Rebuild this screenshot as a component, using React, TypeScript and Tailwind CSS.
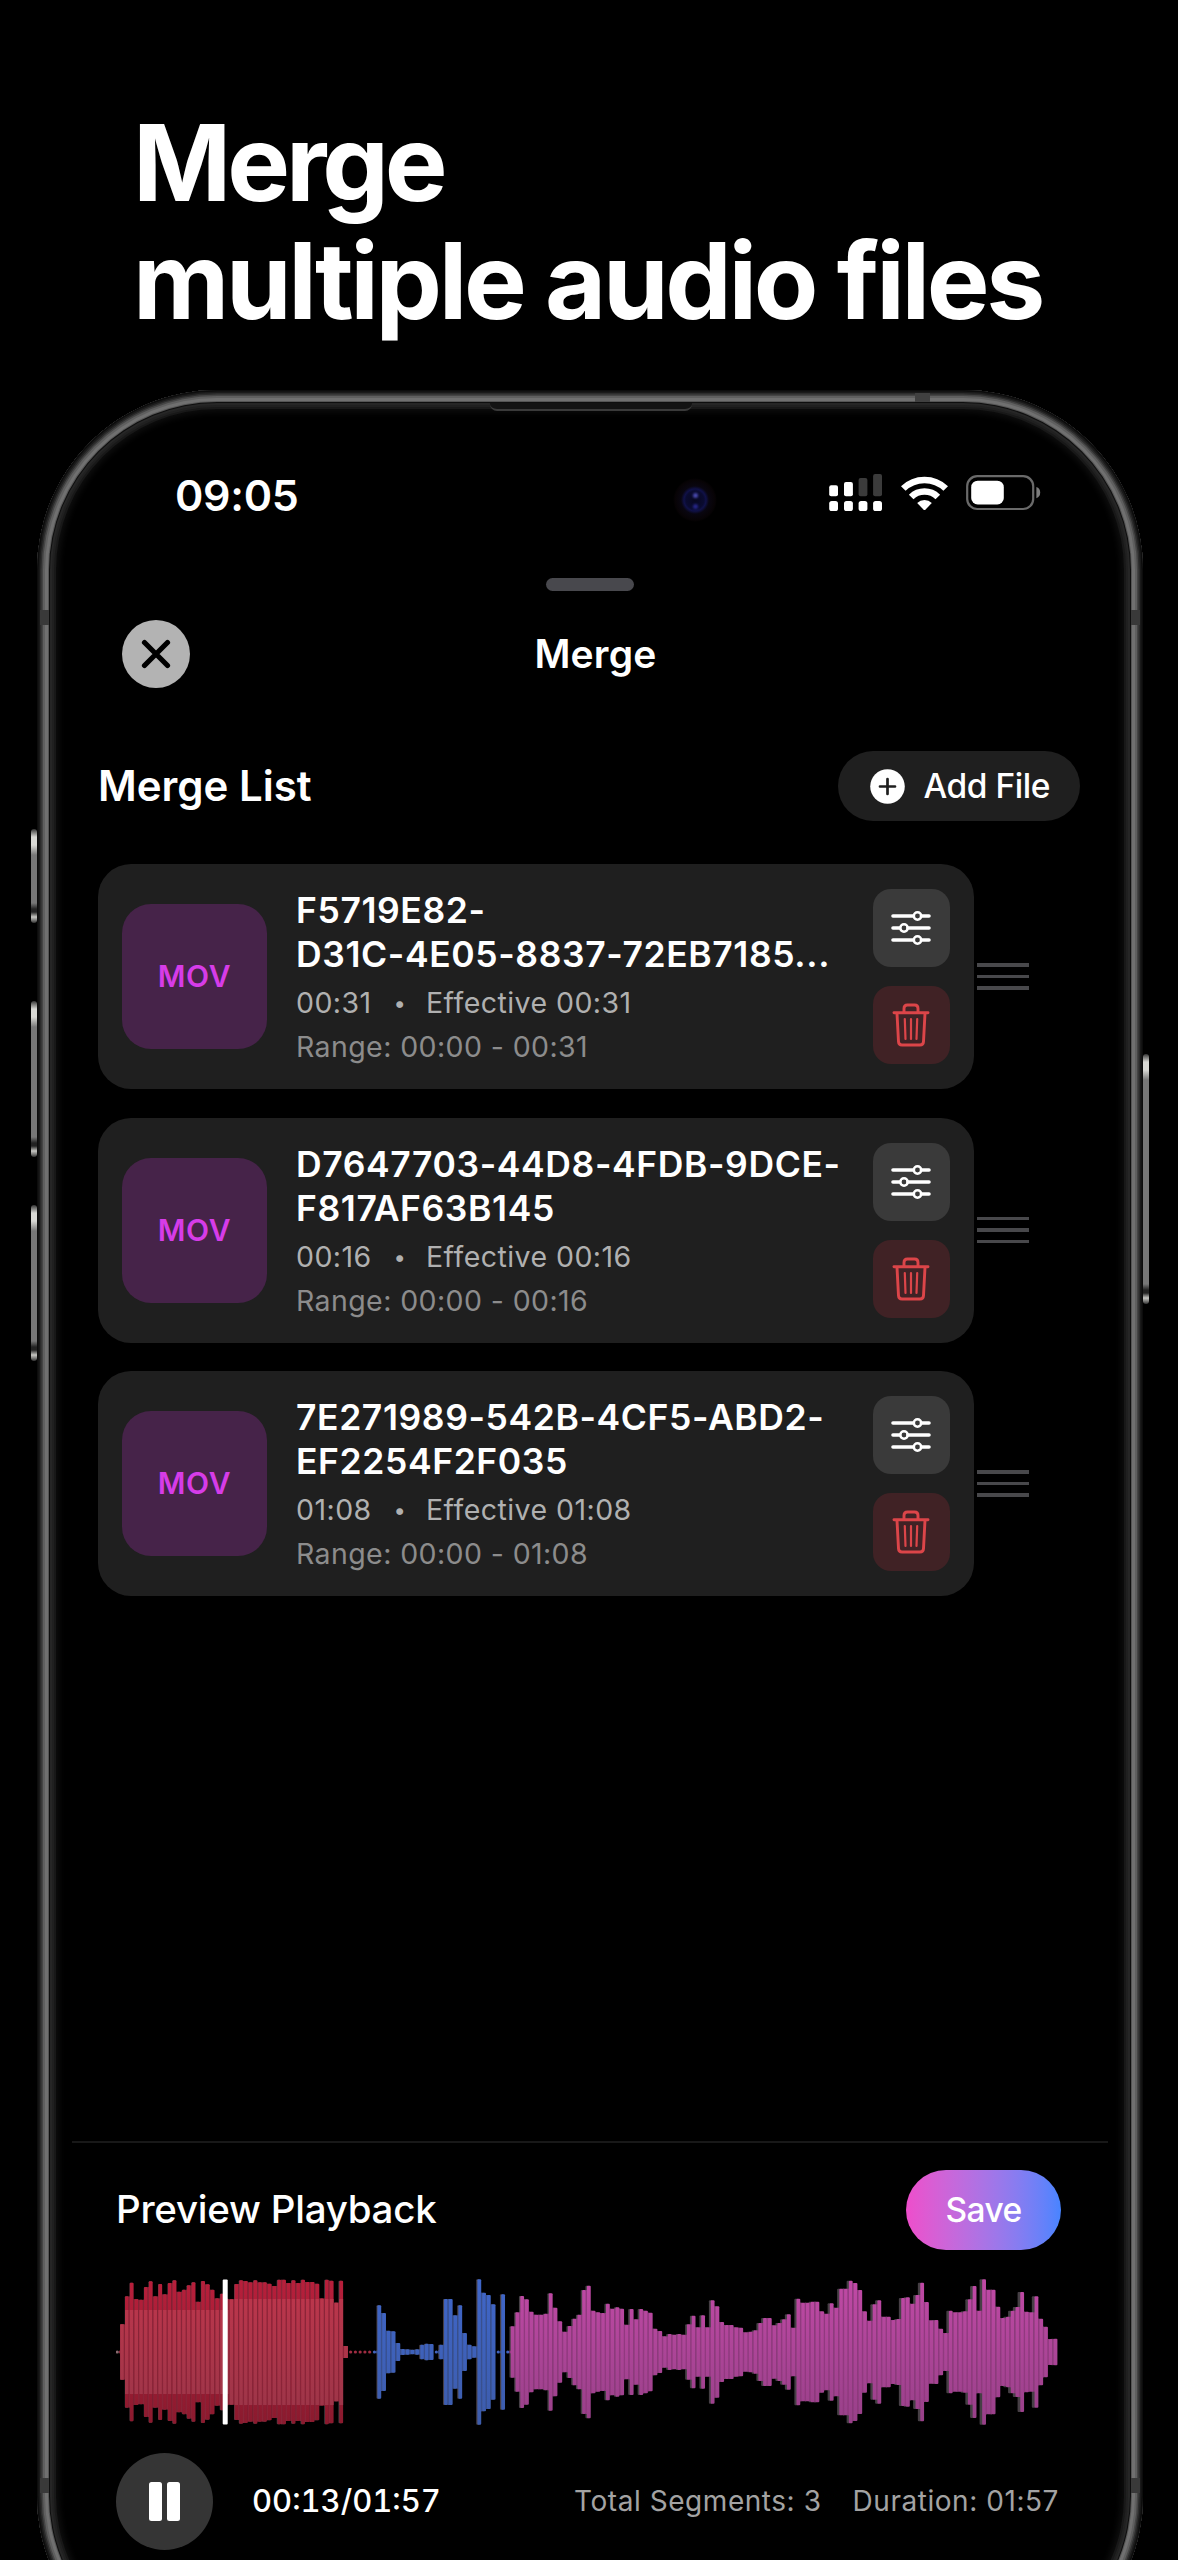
type Clip = {
  lines: string[];
  length: string;
};

const CLIPS: Clip[] = [
  { lines: ['F5719E82-', 'D31C-4E05-8837-72EB7185...'], length: '00:31' },
  { lines: ['D7647703-44D8-4FDB-9DCE-', 'F817AF63B145'], length: '00:16' },
  { lines: ['7E271989-542B-4CF5-ABD2-', 'EF2254F2F035'], length: '01:08' },
];

// bar half heights, 218 = full scale
const RED = [
  4, 83, 167, 208, 159, 157, 195, 212, 167, 204, 173, 207, 215, 181, 187, 200, 209, 151, 213, 203,
  187, 161, 175, 160, 158, 204, 215, 213, 209, 215, 209, 209, 205, 198, 217, 217, 207, 215, 207, 217,
  210, 210, 205, 161, 217, 214, 148, 214, 18, 4, 4, 4, 4, 4,
];
const BLUE = [
  4, 140, 117, 64, 62, 27, 9, 8, 7, 8, 22, 25, 24, 5, 22, 159, 159, 110, 140, 57, 22, 17, 218, 178,
  171, 143, 4, 173, 4,
];
const PINK = [
  77, 119, 168, 158, 121, 112, 112, 115, 176, 133, 92, 61, 78, 100, 112, 186, 199, 124, 119, 117,
  145, 130, 134, 130, 82, 129, 98, 129, 124, 118, 70, 63, 47, 54, 52, 54, 52, 83, 109, 74, 110, 74,
  155, 137, 90, 81, 81, 74, 73, 59, 61, 65, 87, 102, 102, 80, 87, 98, 113, 73, 160, 148, 148, 151,
  151, 122, 115, 146, 133, 190, 190, 214, 207, 186, 122, 94, 143, 155, 106, 106, 96, 99, 162, 164,
  145, 171, 208, 150, 95, 96, 70, 57, 124, 119, 119, 122, 158, 198, 124, 218, 187, 187, 136, 102,
  106, 124, 135, 180, 121, 119, 167, 100, 76, 39, 40,
];

const BARS = [
  ...RED.map((h) => ({ h, tone: 'red' })),
  ...BLUE.map((h) => ({ h, tone: 'blue' })),
  ...PINK.map((h) => ({ h, tone: 'pink' })),
];

const PITCH = 4.762;
const barX = (i: number) => 1.3 + i * PITCH;

function Waveform() {
  const mid = 73;
  return (
    <svg width="944" height="146" viewBox="0 0 944 146" className="block">
      <defs>
        <linearGradient id="red" gradientUnits="userSpaceOnUse" x1="0" y1="0" x2="0" y2="146">
          <stop offset="0" stopColor="#b81f3b" />
          <stop offset="1" stopColor="#8a1a2e" />
        </linearGradient>
        <linearGradient id="redInner" gradientUnits="userSpaceOnUse" x1="0" y1="0" x2="0" y2="146">
          <stop offset="0" stopColor="#c0364c" />
          <stop offset="1" stopColor="#983548" />
        </linearGradient>
        <linearGradient id="blue" gradientUnits="userSpaceOnUse" x1="0" y1="0" x2="0" y2="146">
          <stop offset="0" stopColor="#3f66c9" />
          <stop offset="1" stopColor="#3d5cab" />
        </linearGradient>
        <linearGradient id="pink" gradientUnits="userSpaceOnUse" x1="0" y1="0" x2="0" y2="146">
          <stop offset="0" stopColor="#c149a6" />
          <stop offset="1" stopColor="#974088" />
        </linearGradient>
      </defs>
      {/* trailing shadow bars, drifting left along the track */}
      {BARS.map(({ h }, i) =>
        h < 6 ? null : (
          <rect
            key={i}
            x={barX(i) - 2 - (i / BARS.length) * 2.6}
            y={mid - h / 3}
            width={3.6}
            height={(h * 2) / 3}
            rx="1"
            fill="#463f45"
          />
        )
      )}
      {BARS.map(({ h, tone }, i) => {
        const half = h / 3;
        const x = barX(i);
        const inner = Math.min(half, i < 24 ? 42 : 53);
        const gap = tone === 'red' ? '#8a2438' : tone === 'blue' ? '#38508f' : '#91397f';
        const prev = i > 0 ? BARS[i - 1].h / 3 : 0;
        const joint = Math.min(half, prev);
        if (half < 2) {
          return (
            <circle
              key={i}
              cx={x}
              cy={mid}
              r="1.6"
              fill={i === 0 ? '#8a6a70' : tone === 'red' ? '#a02c42' : tone === 'blue' ? '#4263bd' : '#a04590'}
            />
          );
        }
        return (
          <g key={i}>
            <rect x={x - 3.1} y={mid - joint} width={1.6} height={joint * 2} fill={gap} />
            <rect x={x - 1.8} y={mid - half} width={3.8} height={half * 2} rx="1" fill={`url(#${tone})`} />
            {tone === 'red' && (
              <rect x={x - 1.8} y={mid - inner} width={3.8} height={inner * 2} fill="url(#redInner)" />
            )}
          </g>
        );
      })}
      <rect x="106.7" y="0.4" width="5" height="145.2" rx="1" fill="#fff" />
    </svg>
  );
}

function SignalIcon() {
  return (
    <svg width="54" height="38" viewBox="0 0 54 38" className="block">
      <g fill="#fff">
        <rect x="0.2" y="11.3" width="8.8" height="11" rx="2" />
        <rect x="15" y="8" width="8.9" height="14.3" rx="2" />
        <rect x="0.2" y="27" width="8.8" height="10" rx="2.6" />
        <rect x="15" y="27" width="8.9" height="10" rx="2.6" />
        <rect x="29.6" y="27" width="8.8" height="10" rx="2.6" />
        <rect x="44.1" y="27" width="8.9" height="10" rx="2.6" />
      </g>
      <g fill="#3b3b3b">
        <rect x="29.6" y="4" width="8.8" height="18.3" rx="2" />
        <rect x="44.1" y="0" width="8.9" height="22.3" rx="2" />
      </g>
    </svg>
  );
}

function WifiIcon() {
  return (
    <svg width="47" height="35" viewBox="0 0 47 35" className="block">
      <g fill="none" stroke="#fff" strokeWidth="6.6">
        <path d="M2.3 12.5 A30.5 30.5 0 0 1 44.7 12.5" />
        <path d="M10.2 21 A19 19 0 0 1 36.8 21" />
      </g>
      <path d="M16.2 27 A10.6 10.6 0 0 1 30.8 27 L24.6 33.6 Q23.5 34.6 22.4 33.6 Z" fill="#fff" />
    </svg>
  );
}

function BatteryIcon() {
  return (
    <svg width="75" height="36" viewBox="0 0 75 36" className="block">
      <rect x="1.2" y="1.2" width="66" height="32.8" rx="10" fill="none" stroke="#6a6a6a" strokeWidth="2.2" />
      <rect x="5.2" y="5.7" width="32.6" height="23.8" rx="6.5" fill="#fff" />
      <path d="M70.4 12 Q74.2 13.2 74.2 17.6 Q74.2 22 70.4 23.2 Z" fill="#7c7c7c" />
    </svg>
  );
}

function SlidersIcon() {
  return (
    <svg width="40" height="36" viewBox="0 0 40 36" fill="none" stroke="#fff" strokeLinecap="round">
      <g strokeWidth="3.6">
        <path d="M2 6h20M30.5 6H38" />
        <path d="M2 18h6.5M17 18h21" />
        <path d="M2 30h20M30.5 30H38" />
      </g>
      <g strokeWidth="2.5">
        <circle cx="26.5" cy="6" r="3.7" />
        <circle cx="13" cy="18" r="3.7" />
        <circle cx="26.5" cy="30" r="3.7" />
      </g>
    </svg>
  );
}

function TrashIcon() {
  return (
    <svg width="38" height="44" viewBox="0 0 38 44" fill="none" stroke="#dc4549" strokeLinecap="round" strokeLinejoin="round">
      <g strokeWidth="2.9">
        <path d="M2 9.8h34" />
        <path d="M12 9V5.4Q12 2 15.4 2h7.2Q26 2 26 5.4V9" />
        <path d="M5 10.4 6.5 38.6Q6.7 42 10 42h18Q31.3 42 31.5 38.6L33 10.4" />
      </g>
      <path d="M12.8 16l.7 20M19 16v20M25.2 16l-.7 20" strokeWidth="2.2" />
    </svg>
  );
}

function ClipRow({ clip }: { clip: Clip }) {
  return (
    <div className="flex items-center gap-[3.5px]">
      <div className="flex h-[225px] w-[875.5px] items-start rounded-[33px] bg-[#1f1f1f] pl-[24px]">
        <div className="mt-[40px] flex h-[145px] w-[145px] shrink-0 items-center justify-center rounded-[29px] bg-[#462349] text-[30px] font-semibold tracking-[0.7px] text-[#d63ce8]">
          MOV
        </div>
        <div className="ml-[29px] w-[576.5px] shrink-0 whitespace-nowrap pt-[25px]">
          <div className="text-[35.5px] leading-[44px] font-semibold tracking-[0.6px] text-white">
            {clip.lines.map((line) => (
              <div key={line}>{line}</div>
            ))}
          </div>
          <div className="mt-[4px] flex text-[28.5px] leading-[44px] tracking-[0.45px] text-[#b0b0b0]">
            <span className="w-[76px]">{clip.length}</span>
            <span className="w-[54px] pl-[2px] text-center text-[22px]">•</span>
            <span>Effective {clip.length}</span>
          </div>
          <div className="text-[28.5px] leading-[44px] tracking-[0.4px] text-[#8c8c8c]">
            Range: 00:00 - {clip.length}
          </div>
        </div>
        <div className="mt-[25px] flex flex-col gap-[19px]">
          <button className="flex h-[78px] w-[77px] items-center justify-center rounded-[18px] bg-[#3a3a3a]">
            <SlidersIcon />
          </button>
          <button className="flex h-[78px] w-[77px] items-center justify-center rounded-[18px] bg-[#402225]">
            <TrashIcon />
          </button>
        </div>
      </div>
      <div className="flex w-[51.5px] flex-col gap-[8px]">
        <div className="h-[3.6px] bg-[#48484b]" />
        <div className="h-[3.6px] bg-[#48484b]" />
        <div className="h-[3.6px] bg-[#48484b]" />
      </div>
    </div>
  );
}

function SideKey({ className }: { className: string }) {
  return (
    <div
      className={`absolute w-[6px] rounded-[3px] bg-[linear-gradient(to_bottom,#333_0,#d8d8d4_8px,#d8d8d4_16px,#777_26px,#777_calc(100%-20px),#222_calc(100%-14px),#222_calc(100%-11px),#c8c8c4_calc(100%-6px),#333_100%)] ${className}`}
    />
  );
}

export default function App() {
  return (
    <div className="h-[2560px] w-[1178px] overflow-hidden bg-black font-[Inter,sans-serif] text-white">
      <h1 className="h-[340px] pt-[104px] pl-[133px] text-[105.5px] leading-[118px] font-bold tracking-[-3.35px] whitespace-nowrap">
        <span className="tracking-[-4.1px]">Merge</span>
        <br />
        multiple audio files
      </h1>

      <div className="relative mt-[50px] ml-[37px] h-[2286px] w-[1106px] rounded-[180px] pt-[75px] shadow-[inset_0_0_0_1.5px_#0c0c0c,inset_0_0_0_3px_#1a1a1a,inset_0_0_0_4.5px_#2c2c2c,inset_0_0_0_6px_#454545,inset_0_0_0_8px_#5f5f5f,inset_0_0_0_11px_#707070,inset_0_0_0_12px_#555,inset_0_0_0_13px_#0e0e0e,inset_0_0_0_15px_#262626,inset_0_0_0_17px_#202020,inset_0_0_0_19px_#181818,inset_0_0_6px_22px_#0e0e0e]">
        {/* hardware keys and antenna bands */}
        <SideKey className="top-[439px] -left-[6.5px] h-[94px]" />
        <SideKey className="top-[611px] -left-[6.5px] h-[156px]" />
        <SideKey className="top-[815px] -left-[6.5px] h-[156px]" />
        <SideKey className="top-[664px] -right-[6px] h-[250px]" />
        <div className="absolute top-[220px] left-[3px] h-[15px] w-[9px] bg-[#393939]" />
        <div className="absolute top-[220px] right-[3px] h-[15px] w-[9px] bg-[#393939]" />
        <div className="absolute top-[2088px] left-[3px] h-[15px] w-[9px] bg-[#393939]" />
        <div className="absolute top-[2088px] right-[3px] h-[15px] w-[9px] bg-[#393939]" />
        <div className="absolute top-[3px] left-[878px] h-[9px] w-[15px] bg-[#404040]" />
        <div className="absolute top-[13px] left-[453px] h-[8px] w-[202px] rounded-b-[7px] border-b-2 border-[#3a3a3a] bg-[#131313]" />
        <div className="absolute top-[88px] left-[636px] h-[44px] w-[44px] rounded-full bg-[radial-gradient(circle,#07071f_0,#0a0b30_9px,#101148_11px,#090610_14px,#070305_20px,transparent_22px)]">
          <div className="absolute top-[15px] left-[20px] h-[5px] w-[5px] rounded-full bg-[#4a4ab0] blur-[1px]" />
          <div className="absolute top-[26px] left-[20px] h-[5px] w-[5px] rounded-full bg-[#26268a] blur-[1px]" />
        </div>

        <div className="flex h-[60px] items-center pr-[102.5px] pl-[138px]">
          <span className="text-[43px] leading-[60px] font-semibold tracking-[-0.3px]">09:05</span>
          <div className="-mt-[4px] ml-auto flex items-center gap-[18px]">
            <SignalIcon />
            <WifiIcon />
            <BatteryIcon />
          </div>
        </div>

        <div className="mx-auto mt-[53px] h-[13px] w-[88px] rounded-full bg-[#48484d]" />

        <header className="mt-[28.5px] flex h-[68px] items-center pr-[74px] pl-[85px]">
          <button className="flex h-[68px] w-[68px] items-center justify-center rounded-full bg-[#b3b3b3]">
            <svg width="30" height="30" viewBox="0 0 30 30" stroke="#000" strokeWidth="5.2" strokeLinecap="round">
              <path d="M3.5 3.5 26.5 26.5M26.5 3.5 3.5 26.5" />
            </svg>
          </button>
          <h2 className="flex-1 pt-[2px] pr-[68px] text-center text-[39px] font-semibold tracking-[0.2px]">Merge</h2>
        </header>

        <div className="mt-[63.5px] flex h-[70px] items-center justify-between pr-[63px] pl-[61px]">
          <h3 className="-mt-[2px] text-[42px] font-semibold">Merge List</h3>
          <button className="flex h-[70px] w-[242px] items-center rounded-full bg-[#1f1f1f] pl-[31.5px]">
            <svg width="35" height="35" viewBox="0 0 35 35">
              <circle cx="17.5" cy="17.5" r="17.3" fill="#fff" />
              <path d="M17.5 10v15M10 17.5h15" stroke="#1f1f1f" strokeWidth="2.7" strokeLinecap="round" />
            </svg>
            <span className="ml-[19px] text-[33.5px] font-medium tracking-[-0.45px]">Add File</span>
          </button>
        </div>

        <div className="mt-[43px] flex flex-col gap-[28.6px] pl-[61px]">
          {CLIPS.map((clip) => (
            <ClipRow key={clip.lines[0]} clip={clip} />
          ))}
        </div>

        <div className="mx-[35px] mt-[544.8px] border-t-2 border-[#181818] pr-[47px] pl-[44px]">
          <div className="mt-[27px] flex h-[80px] items-center justify-between">
            <h3 className="text-[38.5px] font-medium tracking-[-0.25px]">Preview Playback</h3>
            <button className="h-[80px] w-[155px] rounded-full bg-linear-to-r from-[#ee4dcb] to-[#4784ff] text-[33.5px] font-medium tracking-[-0.6px]">
              Save
            </button>
          </div>
          <div className="mt-[29px]">
            <Waveform />
          </div>
          <div className="mt-[28px] flex items-center">
            <div className="flex h-[97px] w-[97px] items-center justify-center gap-[5.5px] rounded-full bg-[#353535]">
              <div className="h-[39px] w-[12.3px] rounded-[2.5px] bg-white" />
              <div className="h-[39px] w-[12.3px] rounded-[2.5px] bg-white" />
            </div>
            <span className="ml-[39px] text-[31px] font-medium tabular-nums">00:13/01:57</span>
            <div className="ml-auto flex gap-[31px] pr-[2px] text-[28px] tracking-[0.55px] text-[#a3a3a3]">
              <span>Total Segments: 3</span>
              <span>Duration: 01:57</span>
            </div>
          </div>
        </div>
      </div>
    </div>
  );
}
